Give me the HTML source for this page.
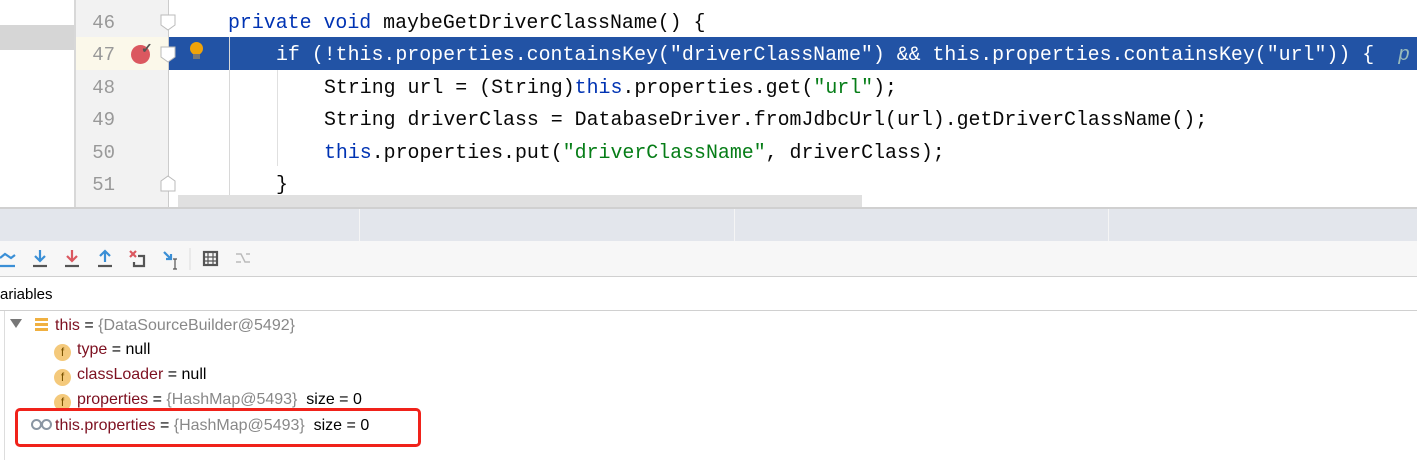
<!DOCTYPE html>
<html><head><meta charset="utf-8"><style>
body{margin:0;width:1417px;height:460px;position:relative;overflow:hidden;background:#fff;font-family:"Liberation Sans",sans-serif}
.abs{position:absolute}
.code{font-family:"Liberation Mono",monospace;font-size:19.9px;white-space:pre;color:#080808}
.ln{font-family:"Liberation Mono",monospace;font-size:19px;color:#999;width:40px;text-align:right}
.k{color:#0033b3}.s{color:#067d17}
.tree{font-size:16px;color:#000}
.v{color:#7d1020}.g{color:#888}
.f{display:inline-block;width:17px;height:17px;border-radius:50%;background:#f4c97b;color:#7a5200;font-size:12px;text-align:center;line-height:17px;vertical-align:-2px;margin-right:6px}
</style></head><body>
<div class="abs" style="left:0;top:25px;width:74px;height:25px;background:#d6d6d6"></div>
<div class="abs" style="left:74px;top:0;width:2px;height:208px;background:#d8d8d8"></div>
<div class="abs" style="left:76px;top:0;width:92px;height:208px;background:#f2f2f2"></div>
<div class="abs" style="left:76px;top:37px;width:92px;height:33px;background:#fbf8ea"></div>
<div class="abs" style="left:168px;top:37px;width:1249px;height:33px;background:#2253a5"></div>
<div class="abs" style="left:168px;top:0;width:1px;height:208px;background:#ccc"></div>
<div class="abs" style="left:229px;top:37px;width:1px;height:170px;background:#d8d8d8"></div>
<div class="abs" style="left:277px;top:70px;width:1px;height:96px;background:#e0e0e0"></div>
<div class="abs" style="left:178px;top:195px;width:684px;height:12px;background:#e0e0e0"></div>
<div class="abs ln" style="left:75px;top:12px">46</div>
<div class="abs ln" style="left:75px;top:44px">47</div>
<div class="abs ln" style="left:75px;top:77px">48</div>
<div class="abs ln" style="left:75px;top:109px">49</div>
<div class="abs ln" style="left:75px;top:142px">50</div>
<div class="abs ln" style="left:75px;top:174px">51</div>
<div class="abs" style="left:131px;top:45px;width:19px;height:19px;border-radius:50%;background:#db5860"></div>
<div class="abs" style="left:141px;top:40px;color:#555;font-size:14px;font-weight:bold">✓</div>
<svg class="abs" style="left:160px;top:14px" width="18" height="180"><g fill="#fff" stroke="#bbb"><path d="M1 1h14v10l-7 5-7-5z"/><path d="M1 33h14v10l-7 5-7-5z"/><path d="M1 177v-10l7-5 7 5v10z"/></g></svg>
<div class="abs" style="left:190px;top:42px;width:13px;height:13px;border-radius:50%;background:#f0a30a"></div>
<div class="abs" style="left:193px;top:54px;width:7px;height:5px;background:#777"></div>
<div class="abs code" style="left:228px;top:11px"><span class="k">private void</span> maybeGetDriverClassName() {</div>
<div class="abs code" style="left:276px;top:43px;color:#fff">if (!this.properties.containsKey("driverClassName") &amp;&amp; this.properties.containsKey("url")) {  <i style="color:#9bb">p</i></div>
<div class="abs code" style="left:324px;top:76px">String url = (String)<span class="k">this</span>.properties.get(<span class="s">"url"</span>);</div>
<div class="abs code" style="left:324px;top:108px">String driverClass = DatabaseDriver.fromJdbcUrl(url).getDriverClassName();</div>
<div class="abs code" style="left:324px;top:141px"><span class="k">this</span>.properties.put(<span class="s">"driverClassName"</span>, driverClass);</div>
<div class="abs code" style="left:276px;top:173px">}</div>
<div class="abs" style="left:0;top:207px;width:1417px;height:2px;background:#d0d0d0"></div>
<div class="abs" style="left:0;top:209px;width:1417px;height:32px;background:#e3e6ec"></div>
<div class="abs" style="left:359px;top:209px;width:1px;height:32px;background:#f5f5f5"></div>
<div class="abs" style="left:734px;top:209px;width:1px;height:32px;background:#f5f5f5"></div>
<div class="abs" style="left:1108px;top:209px;width:1px;height:32px;background:#f5f5f5"></div>
<div class="abs" style="left:0;top:241px;width:1417px;height:35px;background:#f7f7f7"></div>
<svg class="abs" style="left:0;top:246px" width="260" height="26"><g stroke-width="2.2" fill="none">
<path d="M0 12l5-4 6 4 4-3M0 20h15" stroke="#3a8fd6"/>
<path d="M40 4v11M35 10l5 5 5-5" stroke="#3a8fd6"/><path d="M33 20h14" stroke="#555"/>
<path d="M72 4v11M67 10l5 5 5-5" stroke="#db5860"/><path d="M65 20h14" stroke="#555"/>
<path d="M105 16v-11M100 10l5-5 5 5" stroke="#3a8fd6"/><path d="M98 20h14" stroke="#555"/>
<path d="M130 5l6 6M136 5l-6 6" stroke="#db5860"/><path d="M138 10h6v10h-10v-4" stroke="#555"/>
<path d="M164 6l7 7M171 8v5h-5" stroke="#3a8fd6"/><path d="M175 13v10M173 13h4M173 23h4" stroke="#555" stroke-width="1.2"/>
<path d="M190 2v22" stroke="#ddd" stroke-width="1"/>
<rect x="204" y="6" width="13" height="13" stroke="#555"/><path d="M204 11h13M204 15h13M208 6v13M213 6v13" stroke="#555" stroke-width="1.2"/>
<path d="M236 8h5l4 8h5M236 16h5M246 8h4" stroke="#bbb" stroke-width="1.5"/>
</g></svg>
<div class="abs" style="left:0;top:276px;width:1417px;height:1px;background:#d0d0d0"></div>
<div class="abs tree" style="left:0;top:286px;font-size:15px">ariables</div>
<div class="abs" style="left:0;top:310px;width:1417px;height:1px;background:#d0d0d0"></div>
<div class="abs" style="left:4px;top:311px;width:1px;height:149px;background:#ddd"></div>
<div class="abs" style="left:10px;top:319px;width:0;height:0;border-left:6px solid transparent;border-right:6px solid transparent;border-top:9px solid #777"></div>
<div class="abs" style="left:35px;top:318px;width:13px;height:3px;background:#f0b040;box-shadow:0 5px 0 #f0b040,0 10px 0 #f0b040"></div>
<div class="abs tree" style="left:55px;top:317px"><span class="v">this</span> = <span class="g">{DataSourceBuilder@5492}</span></div>
<div class="abs tree" style="left:54px;top:341px"><span class="f">f</span><span class="v">type</span> = null</div>
<div class="abs tree" style="left:54px;top:366px"><span class="f">f</span><span class="v">classLoader</span> = null</div>
<div class="abs tree" style="left:54px;top:391px"><span class="f">f</span><span class="v">properties</span> = <span class="g">{HashMap@5493}</span>&nbsp; size = 0</div>
<div class="abs" style="left:31px;top:419px;width:7px;height:7px;border:2px solid #8a96a3;border-radius:50%"></div>
<div class="abs" style="left:41px;top:419px;width:7px;height:7px;border:2px solid #8a96a3;border-radius:50%"></div>
<div class="abs tree" style="left:55px;top:417px"><span class="v">this.properties</span> = <span class="g">{HashMap@5493}</span>&nbsp; size = 0</div>
<div class="abs" style="left:15px;top:408px;width:400px;height:33px;border:3px solid #f0221a;border-radius:5px"></div>
</body></html>
